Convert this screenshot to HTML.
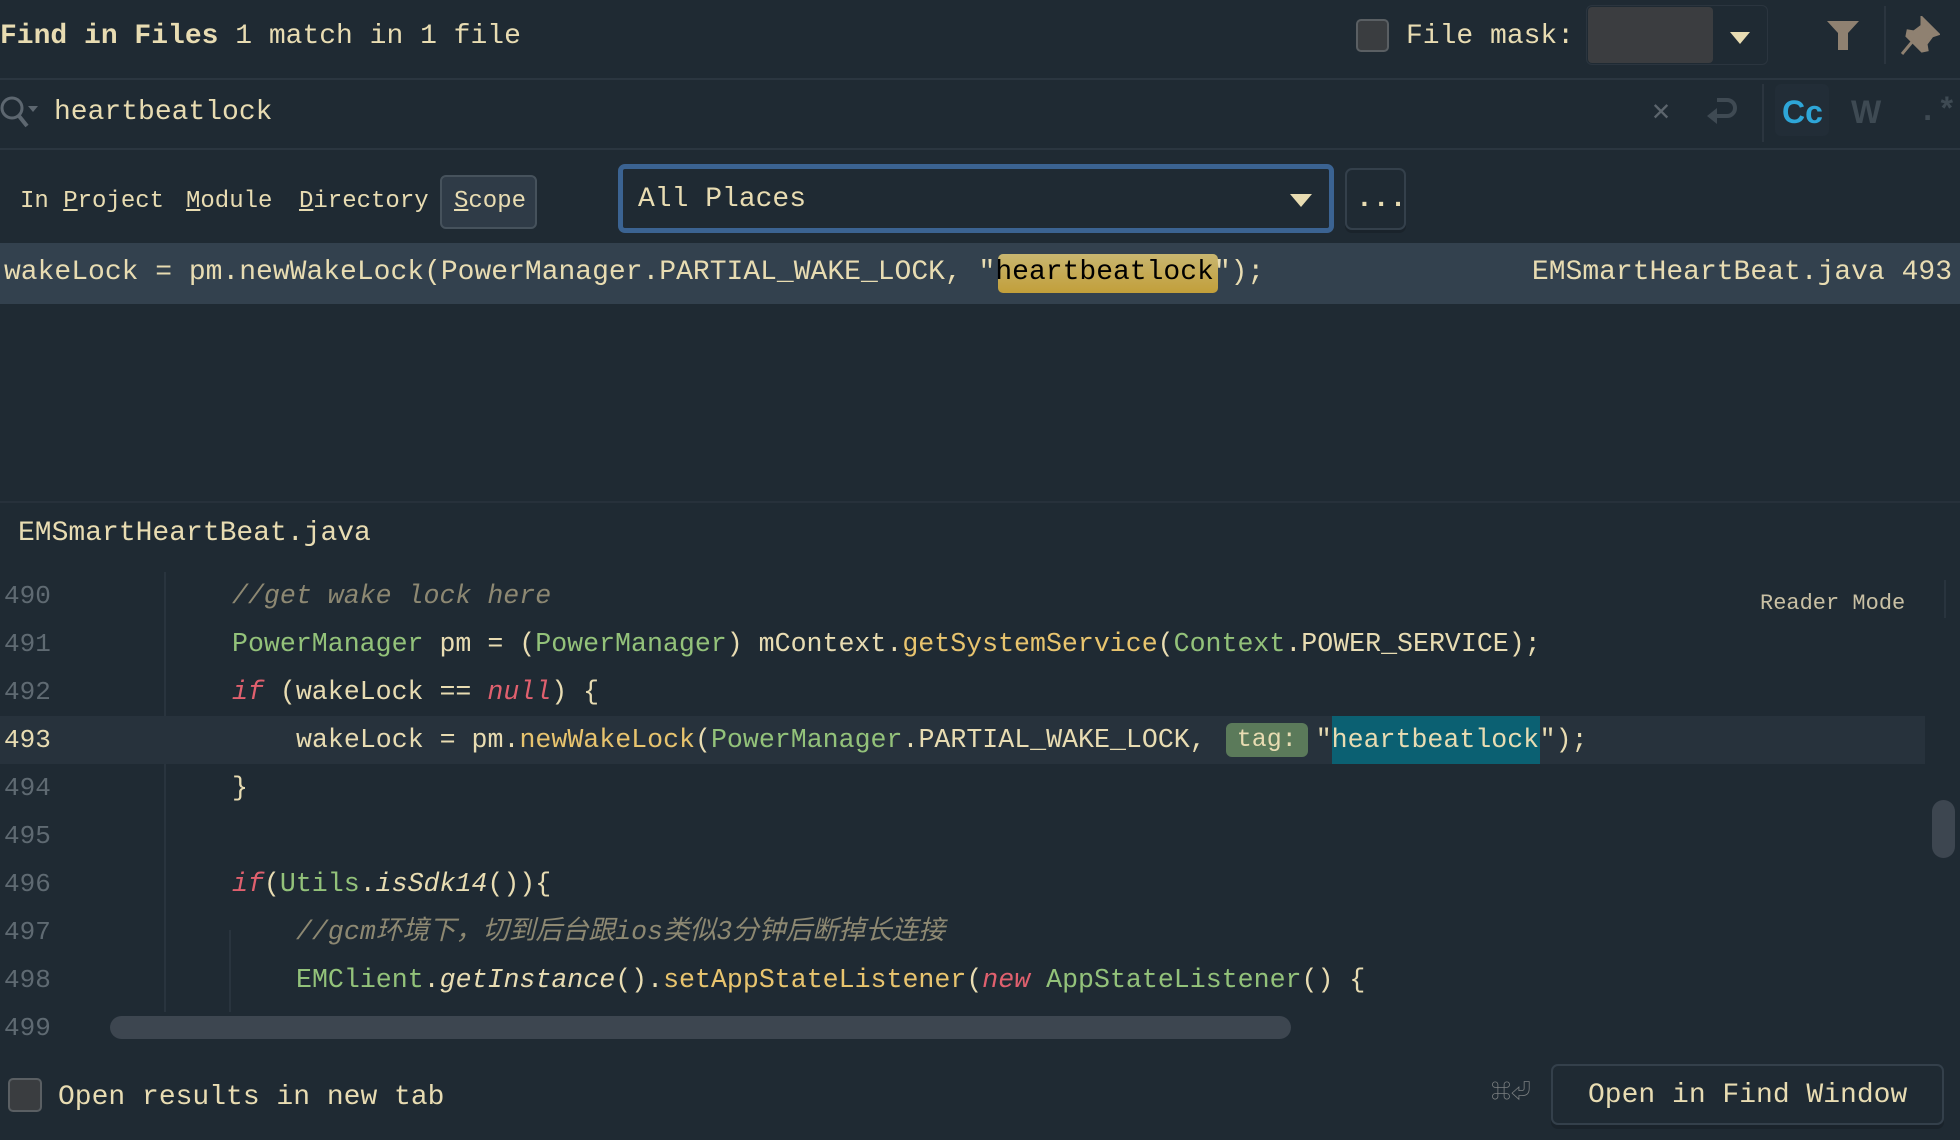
<!DOCTYPE html>
<html><head><meta charset="utf-8"><style>
*{margin:0;padding:0;box-sizing:border-box}
body{width:1960px;height:1140px;background:#1f2a33;overflow:hidden;position:relative;font-family:"Liberation Mono","Noto Sans CJK SC",monospace;color:#e8dcb2;font-size:28px}
.a{position:absolute;white-space:pre;line-height:1}
.hl{position:absolute;left:0;right:0;height:2px;background:#2b3640}
.g{color:#93c27a}.y{color:#e8c46e}.r{color:#e0606e;font-style:italic}.c{color:#8d8872;font-style:italic}.i{font-style:italic}
.ln{position:absolute;left:4px;color:#5f6a72;font-size:26px;line-height:48px}
.cl{position:absolute;height:48px;line-height:48px;white-space:pre;font-size:26.6px}
</style></head><body>
<div class="a" style="left:0;top:23px"><b>Find in Files</b> 1 match in 1 file</div>
<div class="a" style="left:1356px;top:19px;width:33px;height:33px;border:2px solid #5a5f63;border-radius:5px;background:#3a3d40"></div>
<div class="a" style="left:1406px;top:23px">File mask:</div>
<div class="a" style="left:1586px;top:5px;width:182px;height:60px;border:1px solid #2b353f;border-radius:6px;background:#1f2a33"></div>
<div class="a" style="left:1588px;top:7px;width:125px;height:56px;background:#3b3d40;border-radius:4px"></div>
<div class="a" style="left:1730px;top:32px;width:0;height:0;border-left:10px solid transparent;border-right:10px solid transparent;border-top:12px solid #e8dcb2"></div>
<svg class="a" style="left:1825px;top:18px" width="36" height="34" viewBox="0 0 36 34"><path d="M2 3h32l-11 12v17h-10v-17z" fill="#8f8171"/></svg>
<div class="a" style="left:1884px;top:6px;width:2px;height:58px;background:#2b353f"></div>
<svg class="a" style="left:1900px;top:16px" width="40" height="40" viewBox="0 0 40 40"><path d="M22 2l16 16-6 2-6 8 1 6-5 1-15-15 1-5 6 1 8-6z M12 26l-10 12" fill="#8f8171" stroke="#8f8171" stroke-width="3"/></svg>
<div class="hl" style="top:78px"></div>
<svg class="a" style="left:0;top:96px" width="40" height="34" viewBox="0 0 40 34"><circle cx="12" cy="12" r="10" fill="none" stroke="#5d6770" stroke-width="3"/><path d="M19 20l8 10" stroke="#5d6770" stroke-width="4"/><path d="M28 10h10l-5 6z" fill="#5d6770"/></svg>
<div class="a" style="left:54px;top:99px">heartbeatlock</div>
<div class="a" style="left:1652px;top:98px;color:#5c656d;font-size:30px">✕</div>
<svg class="a" style="left:1705px;top:94px" width="36" height="34" viewBox="0 0 36 34"><path d="M12 6h10a8 8 0 0 1 0 16h-14" fill="none" stroke="#3f4a53" stroke-width="4"/><path d="M12 14l-10 8 10 8z" fill="#3f4a53"/></svg>
<div class="a" style="left:1762px;top:84px;width:2px;height:58px;background:#2b353f"></div>
<div class="a" style="left:1775px;top:84px;width:54px;height:52px;background:#222d37;border-radius:6px"></div>
<div class="a" style="left:1782px;top:96px;color:#2ea6d8;font-weight:bold;font-family:'Liberation Sans',sans-serif;font-size:32px">Cc</div>
<div class="a" style="left:1851px;top:96px;color:#3e4a53;font-weight:bold;font-family:'Liberation Sans',sans-serif;font-size:32px">W</div>
<div class="a" style="left:1918px;top:96px;color:#3e4a53;font-weight:bold;font-size:32px">.*</div>
<div class="hl" style="top:148px"></div>
<div class="a" style="left:20px;top:190px;font-size:24px">In <u>P</u>roject</div>
<div class="a" style="left:186px;top:190px;font-size:24px"><u>M</u>odule</div>
<div class="a" style="left:299px;top:190px;font-size:24px"><u>D</u>irectory</div>
<div class="a" style="left:440px;top:175px;width:97px;height:54px;background:#2f3b47;border:2px solid #46525c;border-radius:6px"></div>
<div class="a" style="left:454px;top:190px;font-size:24px"><u>S</u>cope</div>
<div class="a" style="left:618px;top:164px;width:716px;height:69px;border:5px solid #3b6392;border-radius:7px"></div>
<div class="a" style="left:638px;top:186px">All Places</div>
<div class="a" style="left:1290px;top:194px;width:0;height:0;border-left:11px solid transparent;border-right:11px solid transparent;border-top:13px solid #e8dcb2"></div>
<div class="a" style="left:1345px;top:168px;width:61px;height:62px;border:2px solid #34404b;border-radius:7px;box-shadow:0 3px 0 #1a232b"></div>
<div class="a" style="left:1356px;top:186px;font-weight:bold">...</div>
<div class="a" style="left:0;top:243px;width:1960px;height:61px;background:#33414e"></div>
<div class="a" style="left:998px;top:254px;width:220px;height:39px;border-radius:5px;background:linear-gradient(#c8b670,#c29f3a)"></div>
<div class="a" style="left:4px;top:259px">wakeLock = pm.newWakeLock(PowerManager.PARTIAL_WAKE_LOCK, "<span style="color:#000">heartbeatlock</span>");</div>
<div class="a" style="right:8px;top:259px">EMSmartHeartBeat.java 493</div>
<div class="hl" style="top:501px;background:#27313b"></div>
<div class="a" style="left:18px;top:520px">EMSmartHeartBeat.java</div>
<div class="a" style="left:164px;top:572px;width:2px;height:440px;background:#29343e"></div>
<div class="a" style="left:229px;top:930px;width:2px;height:82px;background:#29343e"></div>
<div class="a" style="left:0;top:716px;width:1925px;height:48px;background:#27323c"></div>
<div class="ln" style="top:572px">490</div>
<div class="ln" style="top:620px">491</div>
<div class="ln" style="top:668px">492</div>
<div class="ln" style="top:716px;color:#e8dcb2">493</div>
<div class="ln" style="top:764px">494</div>
<div class="ln" style="top:812px">495</div>
<div class="ln" style="top:860px">496</div>
<div class="ln" style="top:908px">497</div>
<div class="ln" style="top:956px">498</div>
<div class="ln" style="top:1004px">499</div>
<div class="cl" style="left:232px;top:572px"><span class="c">//get wake lock here</span></div>
<div class="cl" style="left:232px;top:620px"><span class="g">PowerManager</span> pm = (<span class="g">PowerManager</span>) mContext.<span class="y">getSystemService</span>(<span class="g">Context</span>.POWER_SERVICE);</div>
<div class="cl" style="left:232px;top:668px"><span class="r">if</span> (wakeLock == <span class="r">null</span>) {</div>
<div class="cl" style="left:296px;top:716px">wakeLock = pm.<span class="y">newWakeLock</span>(<span class="g">PowerManager</span>.PARTIAL_WAKE_LOCK,<span style="display:inline-block;margin-left:20px;width:82px;height:34px;line-height:34px;background:#5b7a5a;border-radius:6px;text-align:center;font-size:25px;vertical-align:middle">tag:</span><span style="margin-left:8px">"</span><span style="display:inline-block;background:#0b6072;width:208px">heartbeatlock</span>");</div>
<div class="cl" style="left:232px;top:764px">}</div>
<div class="cl" style="left:232px;top:860px"><span class="r">if</span>(<span class="g">Utils</span>.<span class="i">isSdk14</span>()){</div>
<div class="cl" style="left:296px;top:908px"><span class="c">//gcm环境下，切到后台跟ios类似3分钟后断掉长连接</span></div>
<div class="cl" style="left:296px;top:956px"><span class="g">EMClient</span>.<span class="i">getInstance</span>().<span class="y">setAppStateListener</span>(<span class="r">new</span> <span class="g">AppStateListener</span>() {</div>
<div class="a" style="left:1760px;top:593px;font-size:22px;color:#c9c0a4">Reader Mode</div>
<div class="a" style="left:1944px;top:580px;width:2px;height:38px;background:#29343e"></div>
<div class="a" style="left:1932px;top:800px;width:23px;height:58px;background:#3d4650;border-radius:12px"></div>
<div class="a" style="left:110px;top:1016px;width:1181px;height:23px;background:#3d4650;border-radius:12px"></div>
<div class="a" style="left:8px;top:1078px;width:34px;height:34px;border:2px solid #5a5f63;border-radius:5px;background:#3a3d40"></div>
<div class="a" style="left:58px;top:1084px">Open results in new tab</div>
<div class="a" style="left:1491px;top:1084px;font-size:20px;color:#7b7f80">⌘⏎</div>
<div class="a" style="left:1551px;top:1064px;width:393px;height:61px;border:2px solid #34404b;border-radius:7px;box-shadow:0 4px 0 #1a232b"></div>
<div class="a" style="left:1588px;top:1082px">Open in Find Window</div>
</body></html>
